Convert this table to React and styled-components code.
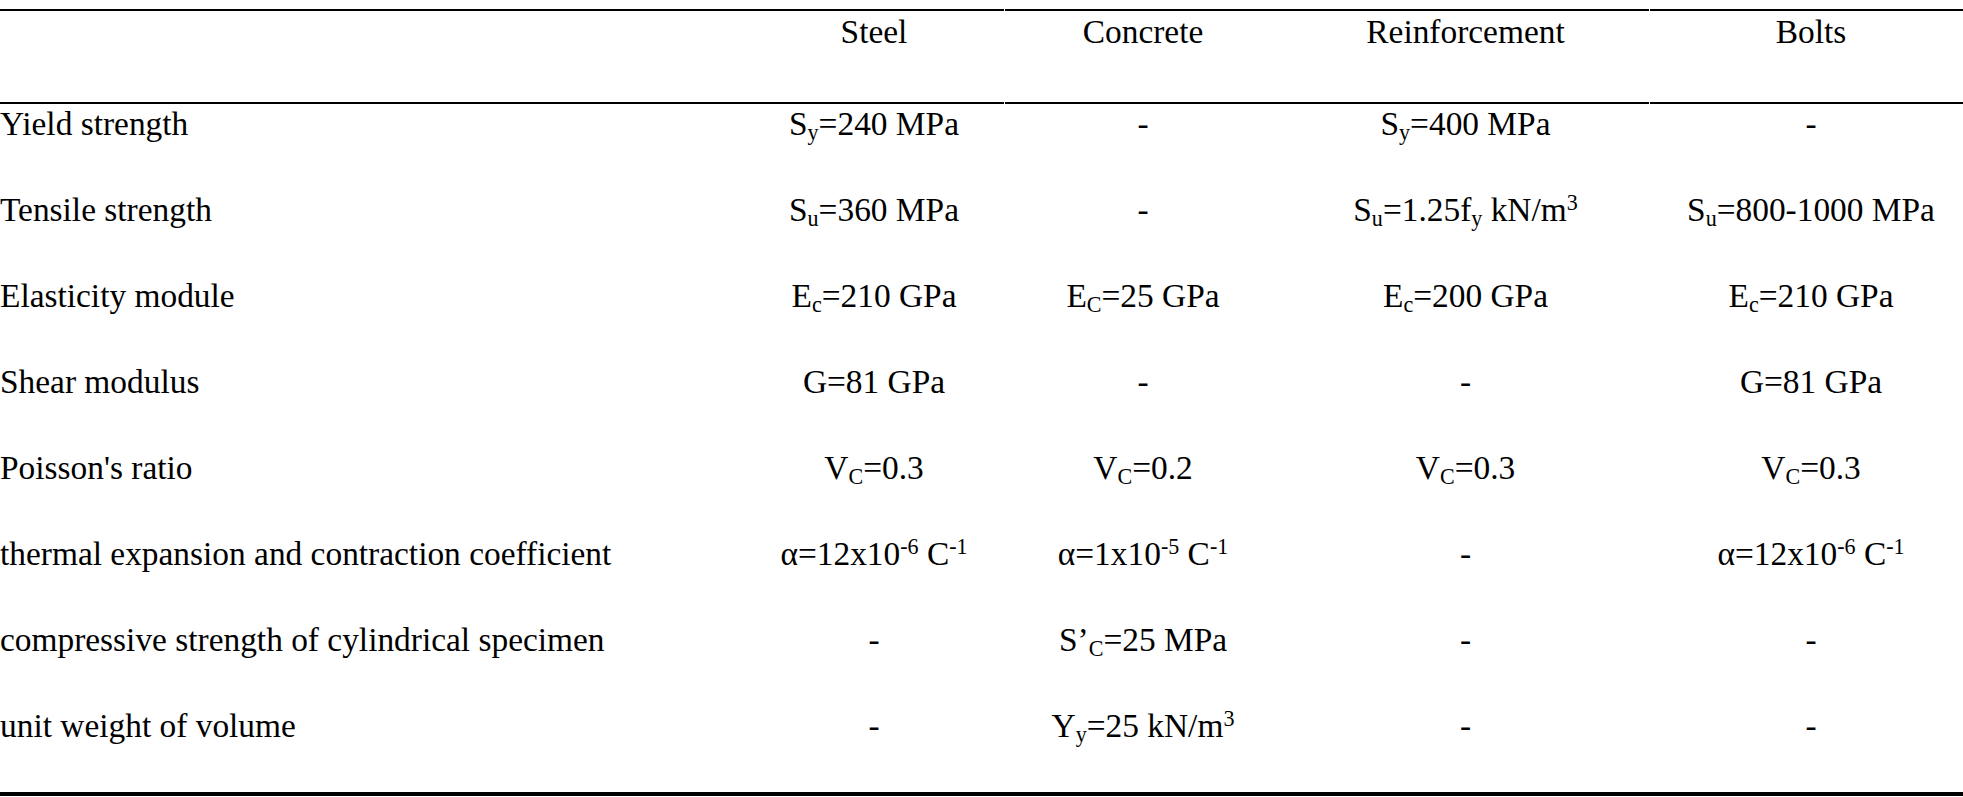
import React from 'react'
import styled, { createGlobalStyle } from 'styled-components'

const GlobalStyle = createGlobalStyle`
  html, body {
    margin: 0;
    padding: 0;
    background: #fff;
    overflow: hidden;
  }
  body {
    font-family: "Liberation Serif", "Times New Roman", serif;
    color: #000;
  }
`

const columns = '743px 262px 276px 369px 322px'

const Table = styled.div`
  margin-top: 9px;
  width: 1972px;
  border-bottom: 4px solid #000;
  font-size: 33.4px;
  line-height: 40px;
`

/* split horizontal rule, with the hairline gaps between column groups */
const Rule = styled.div`
  display: grid;
  grid-template-columns: 1004px 644px 1fr;
  column-gap: 1px;
  height: 2px;
`

const RuleSegment = styled.div`
  background: #000;
`

const Row = styled.div`
  display: grid;
  grid-template-columns: ${columns};
  height: ${p => p.$height}px;
  padding-top: ${p => p.$pad || 0}px;
  box-sizing: border-box;
`

const Cell = styled.div`
  text-align: ${p => (p.$label ? 'left' : 'center')};
  white-space: nowrap;
`

const Sub = styled.sub`
  font-size: 0.66em;
  line-height: 0;
  vertical-align: -0.22em;
`

const Sup = styled.sup`
  font-size: 0.66em;
  line-height: 0;
  vertical-align: 0.5em;
`

const S = (base, sub) => (
  <>
    {base}
    <Sub>{sub}</Sub>
  </>
)

const alpha = (exp) => (
  <>
    α=1{exp === '-6' ? '2' : ''}x10<Sup>{exp}</Sup> C<Sup>-1</Sup>
  </>
)

const rows = [
  ['Yield strength', <>{S('S', 'y')}=240 MPa</>, '-', <>{S('S', 'y')}=400 MPa</>, '-'],
  [
    'Tensile strength',
    <>{S('S', 'u')}=360 MPa</>,
    '-',
    <>{S('S', 'u')}=1.25{S('f', 'y')} kN/m<Sup>3</Sup></>,
    <>{S('S', 'u')}=800-1000 MPa</>
  ],
  [
    'Elasticity module',
    <>{S('E', 'c')}=210 GPa</>,
    <>{S('E', 'C')}=25 GPa</>,
    <>{S('E', 'c')}=200 GPa</>,
    <>{S('E', 'c')}=210 GPa</>
  ],
  ['Shear modulus', 'G=81 GPa', '-', '-', 'G=81 GPa'],
  [
    "Poisson's ratio",
    <>{S('V', 'C')}=0.3</>,
    <>{S('V', 'C')}=0.2</>,
    <>{S('V', 'C')}=0.3</>,
    <>{S('V', 'C')}=0.3</>
  ],
  ['thermal expansion and contraction coefficient', alpha('-6'), alpha('-5'), '-', alpha('-6')],
  ['compressive strength of cylindrical specimen', '-', <>{S('S’', 'C')}=25 MPa</>, '-', '-'],
  ['unit weight of volume', '-', <>{S('Y', 'y')}=25 kN/m<Sup>3</Sup></>, '-', '-']
]

const headers = ['', 'Steel', 'Concrete', 'Reinforcement', 'Bolts']

const SplitRule = () => (
  <Rule>
    <RuleSegment />
    <RuleSegment />
    <RuleSegment />
  </Rule>
)

const App = () => (
  <>
    <GlobalStyle />
    <Table>
      <SplitRule />
      <Row $height={91} $pad={1}>
        {headers.map((h, i) => (
          <Cell key={i} $label={i === 0}>{h}</Cell>
        ))}
      </Row>
      <SplitRule />
      {rows.map((r, ri) => (
        <Row key={ri} $height={86}>
          {r.map((c, ci) => (
            <Cell key={ci} $label={ci === 0}>{c}</Cell>
          ))}
        </Row>
      ))}
    </Table>
  </>
)

export default App
